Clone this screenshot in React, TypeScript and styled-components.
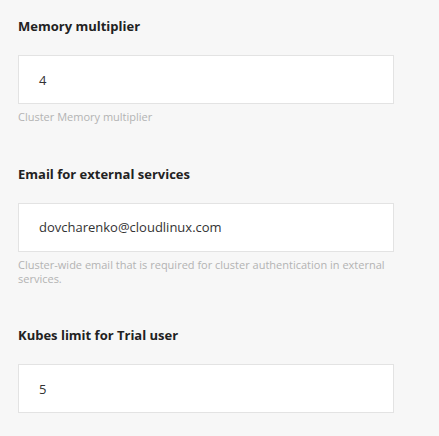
import React from "react";
import styled, { createGlobalStyle } from "styled-components";

const Global = createGlobalStyle`
  html, body { margin: 0; padding: 0; background: #f7f7f7; }
  body { font-family: "Open Sans", "Noto Sans", sans-serif; }
`;

const Page = styled.div`
  padding: 16px 0 0 18px;
  width: 376px;
  display: flex;
  flex-direction: column;
  gap: 39.5px;
`;

const Field = styled.div`
  display: flex;
  flex-direction: column;
`;

const Label = styled.div`
  font-size: 13px;
  font-weight: 700;
  line-height: 20px;
  color: #222;
  margin-bottom: 19px;
`;

const Input = styled.div`
  box-sizing: border-box;
  height: 49px;
  background: #fff;
  border: 1px solid #e3e3e3;
  padding: 0 20px;
  display: flex;
  align-items: center;
  font-size: 13px;
  color: #333;
`;

const Help = styled.div`
  margin-top: 6px;
  font-size: 11px;
  line-height: 14px;
  color: #b3b3b3;
`;

const fields = [
  { label: "Memory multiplier", value: "4", help: "Cluster Memory multiplier" },
  {
    label: "Email for external services",
    value: "dovcharenko@cloudlinux.com",
    help: "Cluster-wide email that is required for cluster authentication in external services.",
  },
  { label: "Kubes limit for Trial user", value: "5" },
];

export default function App() {
  return (
    <>
      <Global />
      <Page>
        {fields.map((f) => (
          <Field key={f.label}>
            <Label>{f.label}</Label>
            <Input>{f.value}</Input>
            {f.help && <Help>{f.help}</Help>}
          </Field>
        ))}
      </Page>
    </>
  );
}
